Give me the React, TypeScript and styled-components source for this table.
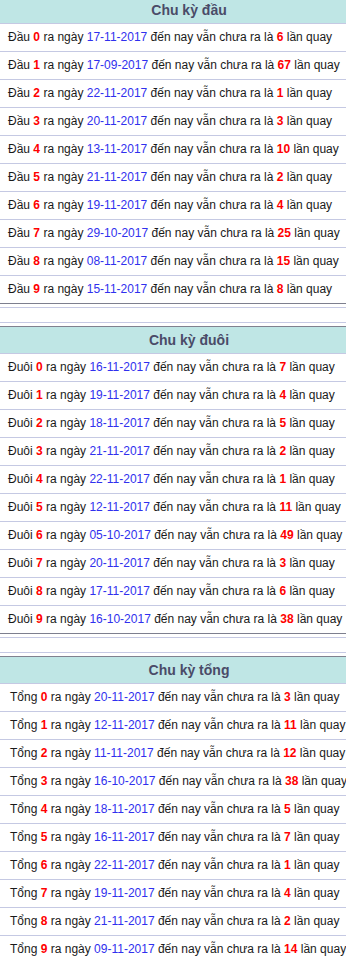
import React from 'react'
import styled, { createGlobalStyle } from 'styled-components'

type Entry = [string, string, string]

interface Block {
  title: string
  label: string
  indent: number
  rows: Entry[]
}

const blocks: Block[] = [
  {
    title: 'Chu kỳ đầu',
    label: 'Đầu',
    indent: 8,
    rows: [
      ['0', '17-11-2017', '6'],
      ['1', '17-09-2017', '67'],
      ['2', '22-11-2017', '1'],
      ['3', '20-11-2017', '3'],
      ['4', '13-11-2017', '10'],
      ['5', '21-11-2017', '2'],
      ['6', '19-11-2017', '4'],
      ['7', '29-10-2017', '25'],
      ['8', '08-11-2017', '15'],
      ['9', '15-11-2017', '8'],
    ],
  },
  {
    title: 'Chu kỳ đuôi',
    label: 'Đuôi',
    indent: 8,
    rows: [
      ['0', '16-11-2017', '7'],
      ['1', '19-11-2017', '4'],
      ['2', '18-11-2017', '5'],
      ['3', '21-11-2017', '2'],
      ['4', '22-11-2017', '1'],
      ['5', '12-11-2017', '11'],
      ['6', '05-10-2017', '49'],
      ['7', '20-11-2017', '3'],
      ['8', '17-11-2017', '6'],
      ['9', '16-10-2017', '38'],
    ],
  },
  {
    title: 'Chu kỳ tổng',
    label: 'Tổng',
    indent: 10,
    rows: [
      ['0', '20-11-2017', '3'],
      ['1', '12-11-2017', '11'],
      ['2', '11-11-2017', '12'],
      ['3', '16-10-2017', '38'],
      ['4', '18-11-2017', '5'],
      ['5', '16-11-2017', '7'],
      ['6', '22-11-2017', '1'],
      ['7', '19-11-2017', '4'],
      ['8', '21-11-2017', '2'],
      ['9', '09-11-2017', '14'],
    ],
  },
]

// Cycle table
function CycleTable({ block }: { block: Block }): JSX.Element {
  return (
    <Table>
      <Caption>{block.title}</Caption>
      {block.rows.map(([num, date, count]) => (
        <Row key={`${block.label}-${num}`} $indent={block.indent}>
          {block.label} <Red>{num}</Red> ra ngày <DateText>{date}</DateText> đến nay vẫn chưa ra là{' '}
          <Red>{count}</Red> lần quay
        </Row>
      ))}
    </Table>
  )
}

export default function App(): JSX.Element {
  return (
    <>
      <GlobalStyle />
      <Page>
        {blocks.map((block, i) => (
          <React.Fragment key={block.title}>
            {i > 0 && <Spacer />}
            <CycleTable block={block} />
          </React.Fragment>
        ))}
      </Page>
    </>
  )
}

// Styled components
const GlobalStyle = createGlobalStyle`
  html, body {
    margin: 0;
    padding: 0;
    background: #ffffff;
  }
  body {
    font-family: "Liberation Sans", Arial, sans-serif;
  }
`
const Page = styled.div`
  width: 100%;
  margin-top: -4px;
  overflow: hidden;
`
const Table = styled.div`
  display: flex;
  flex-direction: column;
  border-top: 1px solid #80818f;
`
const Caption = styled.div`
  height: 26px;
  line-height: 26px;
  padding-left: 32px;
  background: #bfe6e5;
  border-bottom: 1px solid #c5c9e3;
  text-align: center;
  font-size: 14px;
  font-weight: bold;
  color: #4a4b68;
`
const Row = styled.div<{ $indent: number }>`
  height: 27px;
  line-height: 27px;
  padding-left: ${props => props.$indent}px;
  border-bottom: 1px solid #c5c9e3;
  font-size: 12px;
  color: #1a1a1a;
  white-space: nowrap;
  overflow: hidden;

  &:last-child {
    border-bottom-color: #7d7f8e;
  }
`
const Red = styled.b`
  color: #ff0000;
`
const DateText = styled.span`
  color: #3030ee;
`
const Spacer = styled.div`
  height: 14px;
  margin: 3px 0;
  border-top: 1px solid #c5c9e3;
  border-bottom: 1px solid #c5c9e3;
`
